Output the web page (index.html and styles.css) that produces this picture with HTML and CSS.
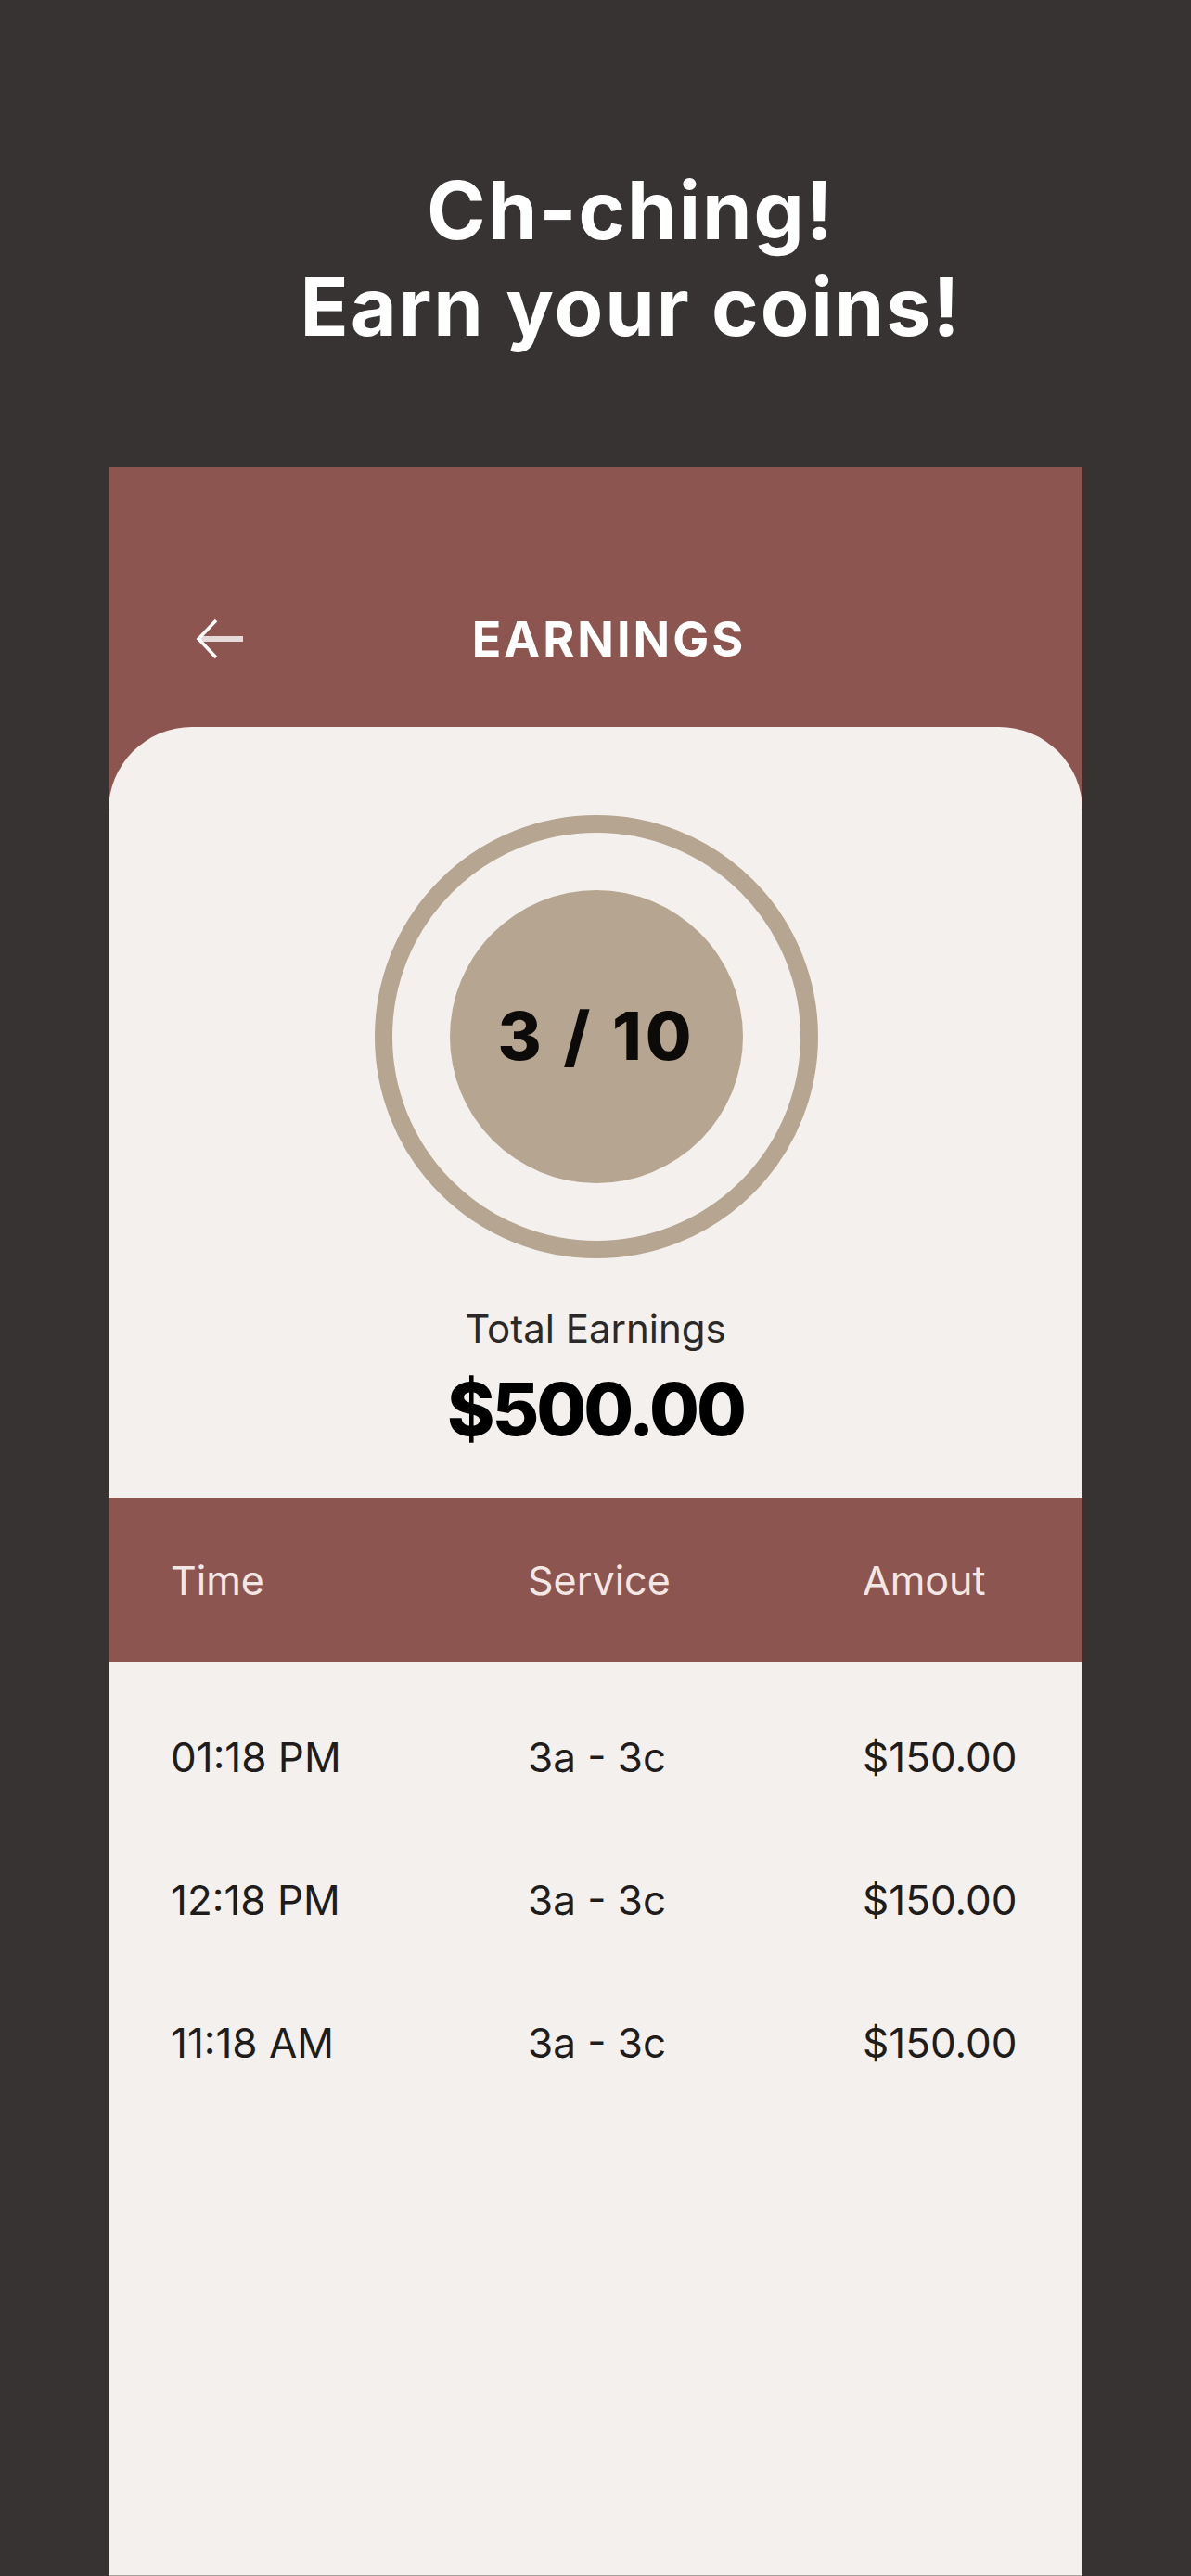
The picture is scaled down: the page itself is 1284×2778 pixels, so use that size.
FILE: index.html
```html
<!DOCTYPE html>
<html lang="en">
<head>
<meta charset="utf-8">
<title>Earnings</title>
<link rel="stylesheet" href="styles.css">
</head>
<body>
  <header class="hero">
    <h1 class="hero-title">Ch-ching!<br>Earn your coins!</h1>
  </header>

  <main class="phone">
    <div class="topbar">
      <div class="nav">
        <svg class="back" viewBox="0 0 52 44" width="52" height="44" aria-hidden="true">
          <path d="M5 22 H52" stroke="#e6dada" stroke-width="6" fill="none"/>
          <path d="M23 2 L4 22 L23 42" stroke="#ffffff" stroke-width="3.5" fill="none" stroke-linejoin="miter"/>
        </svg>
        <div class="nav-title">EARNINGS</div>
      </div>
    </div>

    <section class="card">
      <div class="summary">
        <div class="ring">
          <div class="coin">3 / 10</div>
        </div>
        <div class="total-label">Total Earnings</div>
        <div class="total-value">$500.00</div>
      </div>

      <div class="table">
        <div class="thead">
          <span>Time</span>
          <span>Service</span>
          <span>Amout</span>
        </div>
        <div class="tbody">
          <div class="trow"><span>01:18 PM</span><span>3a - 3c</span><span>$150.00</span></div>
          <div class="trow"><span>12:18 PM</span><span>3a - 3c</span><span>$150.00</span></div>
          <div class="trow"><span>11:18 AM</span><span>3a - 3c</span><span>$150.00</span></div>
        </div>
      </div>
    </section>
  </main>
</body>
</html>
```

FILE: styles.css
```css
* { box-sizing: border-box; }

html, body {
  margin: 0;
  padding: 0;
}

body {
  width: 1284px;
  height: 2778px;
  overflow: hidden;
  background: #373332;
  font-family: "Inter", "Liberation Sans", sans-serif;
  display: flex;
  flex-direction: column;
  align-items: center;
}

.hero {
  padding-top: 175px;
  padding-left: 76px;
  width: 100%;
}

.hero-title {
  margin: 0;
  color: #ffffff;
  font-weight: 700;
  font-size: 86px;
  line-height: 104px;
  text-align: center;
  letter-spacing: 2px;
}

.phone {
  margin-top: 121px;
  width: 1050px;
  flex: 1;
  background: #8d554f;
  display: flex;
  flex-direction: column;
  border-bottom: 1px solid #aaa49e;
}

.topbar {
  height: 280px;
  padding-top: 141px;
}

.nav {
  height: 88px;
  display: flex;
  align-items: center;
  padding-left: 93px;
  padding-right: 116px;
}

.back {
  display: block;
  flex: none;
}

.nav-title {
  flex: 1;
  text-align: center;
  color: #ffffff;
  font-weight: 700;
  font-size: 52px;
  letter-spacing: 3px;
}

.card {
  flex: 1;
  background: #f4f0ed;
  border-radius: 90px 90px 0 0;
  padding-top: 95px;
  display: flex;
  flex-direction: column;
}

.summary {
  display: flex;
  flex-direction: column;
  align-items: center;
}

.ring {
  width: 478px;
  height: 478px;
  border-radius: 50%;
  border: 19px solid #b6a691;
  display: flex;
  align-items: center;
  justify-content: center;
  margin-left: 2px;
}

.coin {
  width: 316px;
  height: 316px;
  border-radius: 50%;
  background: #b6a691;
  display: flex;
  align-items: center;
  justify-content: center;
  color: #0d0b0a;
  font-weight: 800;
  font-size: 72px;
  letter-spacing: 4px;
  padding-bottom: 4px;
}

.total-label {
  margin-top: 51px;
  font-size: 42px;
  line-height: 50px;
  color: #2b2928;
}

.total-value {
  margin-top: 17px;
  font-size: 78px;
  line-height: 90px;
  font-weight: 800;
  letter-spacing: -3px;
  color: #000000;
}

.table {
  margin-top: 50px;
  flex: 1;
  display: flex;
  flex-direction: column;
}

.thead,
.trow {
  display: grid;
  grid-template-columns: 385px 361px 1fr;
  align-items: center;
  padding-left: 67px;
}

.thead {
  height: 177px;
  background: #8d554f;
  color: #f3e7e6;
  font-size: 43px;
  line-height: 52px;
}

.tbody {
  padding-top: 26px;
}

.trow {
  height: 154px;
  font-size: 44px;
  line-height: 53px;
  color: #1f1d1c;
}
```
